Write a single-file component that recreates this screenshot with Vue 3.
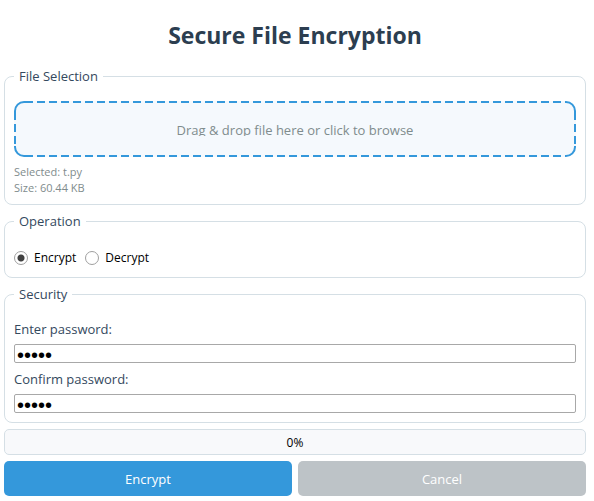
<script setup>
import { computed, ref } from 'vue'

const operation = ref('encrypt')
const password = ref('12345')
const confirmation = ref('12345')
const progress = ref(0)
const file = ref({ name: 't.py', size: '60.44 KB' })

const actionLabel = computed(() => (operation.value === 'encrypt' ? 'Encrypt' : 'Decrypt'))
</script>

<template>
  <main class="window">
    <h1 class="title">Secure File Encryption</h1>

    <fieldset class="group">
      <legend>File Selection</legend>
      <button type="button" class="dropzone">
        <svg class="outline" aria-hidden="true">
          <svg class="edge-x" x="11" y="0">
            <line x1="0" y1="1" x2="100%" y2="1" />
          </svg>
          <svg class="edge-x" x="11" y="100%">
            <line x1="0" y1="-1" x2="100%" y2="-1" />
          </svg>
          <svg class="edge-y" x="0" y="11">
            <line x1="1" y1="0" x2="1" y2="100%" />
          </svg>
          <svg class="edge-y" x="100%" y="11">
            <line x1="-1" y1="0" x2="-1" y2="100%" />
          </svg>
          <path d="M1 11V10A9 9 0 0 1 10 1H11" />
          <svg x="100%" y="0"><path d="M-11 1H-10A9 9 0 0 1 -1 10V11" /></svg>
          <svg x="100%" y="100%"><path d="M-1 -11V-10A9 9 0 0 1 -10 -1H-11" /></svg>
          <svg x="0" y="100%"><path d="M1 -11V-10A9 9 0 0 0 10 -1H11" /></svg>
        </svg>
        <span class="hint">Drag &amp; drop file here or click to browse</span>
      </button>
      <p class="details">
        Selected: {{ file.name }}<br />
        Size: {{ file.size }}
      </p>
    </fieldset>

    <fieldset class="group">
      <legend>Operation</legend>
      <div class="options">
        <label class="option">
          <input v-model="operation" type="radio" name="operation" value="encrypt" />
          Encrypt
        </label>
        <label class="option">
          <input v-model="operation" type="radio" name="operation" value="decrypt" />
          Decrypt
        </label>
      </div>
    </fieldset>

    <fieldset class="group">
      <legend>Security</legend>
      <div class="fields">
        <div class="field">
          <label for="password">Enter password:</label>
          <input id="password" v-model="password" type="password" />
        </div>
        <div class="field">
          <label for="confirmation">Confirm password:</label>
          <input id="confirmation" v-model="confirmation" type="password" />
        </div>
      </div>
    </fieldset>

    <div class="progress" role="progressbar" :aria-valuenow="progress" aria-valuemin="0" aria-valuemax="100">
      {{ progress }}%
    </div>

    <div class="actions">
      <button type="button" class="action primary">{{ actionLabel }}</button>
      <button type="button" class="action" disabled>Cancel</button>
    </div>
  </main>
</template>

<style>
body {
  margin: 0;
  background: #ffffff;
}
</style>

<style scoped>
.window {
  padding: 19px 8px 4px 4px;
  font-family: "Open Sans", "Noto Sans", sans-serif;
  font-size: 13px;
  line-height: 20px;
  color: #34495e;
}

.title {
  margin: 0 0 15px;
  font-size: 23px;
  line-height: 32px;
  font-weight: 700;
  text-align: center;
  color: #2c3e50;
}

.group {
  min-width: 0;
  margin: 0 0 6px;
  padding: 15px 9px 8px;
  border: 1px solid #d5dfe5;
  border-radius: 8px;
}

.group legend {
  padding: 0 5px;
}

.dropzone {
  position: relative;
  display: block;
  width: 100%;
  height: 56px;
  padding: 0;
  border: 0;
  border-radius: 10px;
  background: #f5f9fd;
  color: #7f8c8d;
  font: inherit;
  cursor: pointer;
}

.outline {
  position: absolute;
  inset: 0;
  width: 100%;
  height: 100%;
  fill: none;
  stroke: #3498db;
  stroke-width: 2;
}

.outline svg {
  overflow: visible;
}

.outline line {
  stroke-dasharray: 8 4;
}

.edge-x {
  width: calc(100% - 22px);
}

.edge-y {
  height: calc(100% - 22px);
}

.hint {
  display: block;
  height: 14px;
  overflow: hidden;
  line-height: 16px;
}

.details {
  margin: 7px 0 0;
  font-size: 11px;
  line-height: 16px;
  color: #7f8c8d;
}

.options {
  display: flex;
  gap: 9px;
  padding: 4px 0 3px;
}

.option {
  display: flex;
  align-items: center;
  gap: 6px;
  font-size: 12px;
  line-height: 16px;
  color: #000000;
}

.option input {
  appearance: none;
  width: 14px;
  height: 14px;
  margin: 0;
  border: 1px solid #a0a0a0;
  border-radius: 50%;
  background: #ffffff;
}

.option input:checked {
  background: radial-gradient(circle, #404040 3px, #ffffff 4px);
}

.fields {
  display: grid;
  gap: 6px;
  padding-bottom: 1px;
}

.field {
  display: grid;
  gap: 5px;
}

.field input {
  box-sizing: border-box;
  width: 100%;
  height: 19px;
  padding: 4px 2px 0;
  border: 1px solid #a8a8a8;
  border-radius: 2px;
  background: #ffffff;
  color: #000000;
  font-family: "Liberation Sans", sans-serif;
  font-size: 20px;
  line-height: 16px;
}

.progress {
  box-sizing: border-box;
  height: 26px;
  margin-bottom: 6px;
  padding-top: 1px;
  border: 1px solid #d5dfe5;
  border-radius: 5px;
  background: #f8f9fb;
  color: #000000;
  font-size: 12px;
  line-height: 24px;
  text-align: center;
}

.actions {
  display: grid;
  grid-template-columns: 1fr 1fr;
  gap: 6px;
}

.action {
  height: 35px;
  padding: 0;
  border: 0;
  border-radius: 5px;
  background: #bdc3c7;
  color: #ffffff;
  font: inherit;
}

.action.primary {
  background: #3498db;
}
</style>
